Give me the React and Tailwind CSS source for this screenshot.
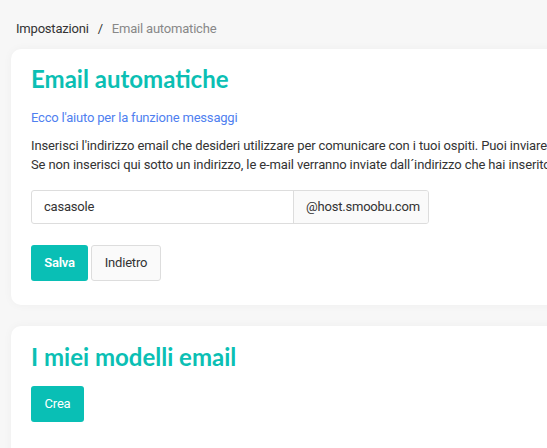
export default function App() {
  return (
    <div className="min-h-screen w-[547px] overflow-hidden bg-[#f7f7f7] font-['Roboto',sans-serif] text-[13px] tracking-[-0.2px] text-[#333]">
      <div className="pl-4 pt-[19px] h-[49px] text-[13px] whitespace-nowrap">
        <span className="text-[#333]">Impostazioni</span>
        <span className="mx-[9px] text-[#333]">/</span>
        <span className="text-[#888]">Email automatiche</span>
      </div>

      <div className="ml-[11px] w-[560px] rounded-[10px] bg-white pl-5 pt-[15px] pb-6 shadow-[0_0_10px_rgba(0,0,0,0.04)]">
        <h1 className="font-['Lato',sans-serif] text-[24px] font-bold leading-[30px] tracking-normal text-[#0bbfb4]">
          Email automatiche
        </h1>
        <a className="mt-[14px] block leading-5 text-[#4f7ff0]">Ecco l'aiuto per la funzione messaggi</a>
        <div className="mt-2 whitespace-nowrap leading-[19px] tracking-[-0.12px]">
          <p>Inserisci l'indirizzo email che desideri utilizzare per comunicare con i tuoi ospiti. Puoi inviare</p>
          <p>Se non inserisci qui sotto un indirizzo, le e-mail verranno inviate dall´indirizzo che hai inserito</p>
        </div>
        <div className="mt-4 flex h-[34px] w-[398px] overflow-hidden rounded-[3px] border border-[#ddd]">
          <div className="flex w-[261px] shrink-0 items-center px-3 text-[#333]">casasole</div>
          <div className="flex min-w-0 flex-1 items-center whitespace-nowrap border-l border-[#ddd] bg-[#fafafa] pl-3 text-[#333]">
            @host.smoobu.com
          </div>
        </div>
        <div className="mt-[21px] flex gap-[3px]">
          <button className="h-9 w-[57px] rounded-[3px] bg-[#09bfb5] font-semibold text-white">Salva</button>
          <button className="h-9 w-[70px] rounded-[3px] border border-[#ddd] bg-[#fafafa] text-[#333]">Indietro</button>
        </div>
      </div>

      <div className="ml-[11px] mt-[21px] h-[140px] w-[560px] rounded-[10px] bg-white pl-5 pt-4 shadow-[0_0_10px_rgba(0,0,0,0.04)]">
        <h2 className="font-['Lato',sans-serif] text-[24px] font-bold leading-[30px] tracking-normal text-[#0bbfb4]">
          I miei modelli email
        </h2>
        <button className="mt-[14px] h-9 w-[53px] rounded-[3px] bg-[#09bfb5] text-white">Crea</button>
      </div>
    </div>
  );
}
